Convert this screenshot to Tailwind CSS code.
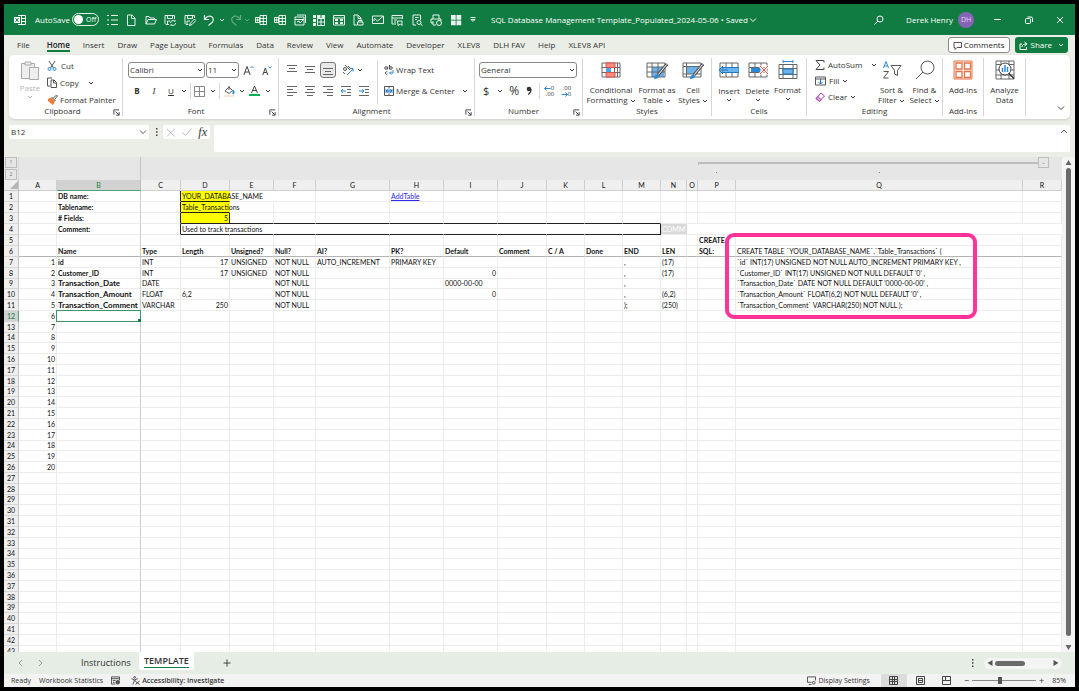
<!DOCTYPE html>
<html lang="en">
  <head>
    <meta charset="UTF-8" />
    <meta name="viewport" content="width=device-width, initial-scale=1.0" />
    <title>SQL Database Management Template_Populated_2024-05-06</title>
    <script src="https://cdn.jsdelivr.net/npm/@tailwindcss/browser@4"></script>
  </head>
  <body class="flex h-screen flex-col overflow-hidden border-4 border-black bg-[#ebeee7] font-['Open_Sans','Noto_Sans',sans-serif] text-[8px] leading-[10px] text-[#333]">
    <!-- shared icons -->
    <svg class="hidden">
      <symbol id="chev" viewBox="0 0 6 6"><path d="M1 2l2 2 2-2" fill="none" stroke="currentColor" /></symbol>
      <symbol id="launch" viewBox="0 0 8 8"><path d="M1 6.500V1h6M3 3l4 4M7 3.500V7H3.500" fill="none" stroke="currentColor" /></symbol>
      <symbol id="tbl" viewBox="0 0 12 12"><path d="M5 1.500h6.500v9H5zM5 4.500h6.500M5 7.500h6.500M8.300 1.500v9M.5 3.500h4v5h-4zM1 6h3M2.500 4.500v3" fill="none" stroke="currentColor" /></symbol>
    </svg>

    <header class="flex h-[31px] shrink-0 items-center bg-[#107c41] text-white">
      <svg class="ml-[10px] size-3" viewBox="0 0 12 12" fill="none" stroke="currentColor"><path d="M4 1.500h7.500v9H4M7.500 1.500v9M7 4.500h4.500M7 7.500h4.500" /><path d="M0 3h6v6H0z" fill="white" stroke="none" /><path d="M1.500 4.200l3 3.600M4.500 4.200l-3 3.600" stroke="#107c41" /></svg>
      <label for="autosave" class="ml-[9px] w-[37px] whitespace-nowrap">AutoSave</label>
      <button id="autosave" class="flex h-[13px] w-[27px] items-center gap-[3px] rounded-full border border-white/90 pl-px text-[7px]"><span class="size-[9px] rounded-full bg-white"></span>Off</button>
      <div class="ml-[7px] flex w-[144px] items-center justify-between text-white/90">
        <button aria-label="Bullets"><svg class="size-3" viewBox="0 0 12 12" stroke="currentColor"><path d="M1 1.500h2M1 6h2M1 10.500h2M5 1.500h7M5 6h7M5 10.500h7" /></svg></button>
        <button aria-label="New"><svg class="size-3" viewBox="0 0 12 12" fill="none" stroke="currentColor"><path d="M2.500 1h4.500l3 3v7.500h-7.500zM6.500 1v3.500H10" /></svg></button>
        <button aria-label="Open"><svg class="size-3" viewBox="0 0 12 12" fill="none" stroke="currentColor"><path d="M1 10V2.500h3l1 1.500h4.500v1.500M1 10l2-4.500h8.500L9.500 10z" /></svg></button>
        <button aria-label="Save"><svg class="size-3" viewBox="0 0 12 12" fill="none" stroke="currentColor"><path d="M5 10.500H2L1 9.500v-8h9.500V5M3.500 1.500v3h5v-3M3.500 10.500V7H6M6.500 9a2.500 2.500 0 0 1 4.500-1.500V6M11.500 9a2.500 2.500 0 0 1-4.500 1.500V12" /></svg></button>
        <button aria-label="Save as"><svg class="size-3" viewBox="0 0 12 12" fill="none" stroke="currentColor"><path d="M4.500 10.500H2L1 9.500v-8h9.500V4M3.500 1.500v3h5v-3M3 10.500V7h3M5.500 11.500l1-2.500L10.500 5 12 6.500 8 10.500z" /></svg></button>
        <button aria-label="Undo"><svg class="size-3" viewBox="0 0 12 12" fill="none" stroke="currentColor" stroke-width="1.200"><path d="M1.500 1v4.500H6M1.800 5.200C4 2 7 1.300 9 3s1.500 4 0 5.500L5.500 11.500" /></svg></button>
        <svg class="-mx-[3px] size-[6px]"><use href="#chev" /></svg>
        <button aria-label="Redo" class="text-white/35"><svg class="size-3" viewBox="0 0 12 12" fill="none" stroke="currentColor" stroke-width="1.200"><path d="M10.500 1v4.500H6M10.200 5.200C8 2 5 1.300 3 3s-1.500 4 0 5.500L6.500 11.500" /></svg></button>
        <svg class="-ml-[5px] size-[6px] text-white/35"><use href="#chev" /></svg>
      </div>
      <div class="ml-[5px] flex w-[222px] items-center justify-between text-white/90">
        <button aria-label="Insert columns"><svg class="size-3"><use href="#tbl" /></svg></button>
        <button aria-label="Delete columns"><svg class="size-3"><use href="#tbl" /></svg></button>
        <button aria-label="Edit range"><svg class="size-3" viewBox="0 0 12 12" fill="none" stroke="currentColor"><path d="M1 3h9v8H1zM1 5.500h9M3 1h8.500v8M3 8l2-1 1 2 3-3" /></svg></button>
        <button aria-label="Pivot"><svg class="size-3" viewBox="0 0 12 12" fill="none" stroke="currentColor"><path d="M4.500 4.500h7v7h-7zM4.500 8h7M8 4.500v7" /><path d="M0 1h3v3H0zM4 1h3.500v3H4zM8.500 1H12v3H8.500zM0 5h3v3H0zM0 9h3v3H0z" fill="currentColor" stroke="none" /></svg></button>
        <button aria-label="Freeze panes"><svg class="size-3" viewBox="0 0 12 12" fill="none" stroke="currentColor"><path d="M.5 1.500h11v9.500H.5zM.5 4h11" /><path d="M2 5h3v2H2zM7 5h3v2H7zM2 8h3v2H2zM7 8h3v2H7z" fill="currentColor" stroke="none" /></svg></button>
        <button aria-label="Page setup"><svg class="size-3" viewBox="0 0 12 12" fill="none" stroke="currentColor"><path d="M5 11H2V1h4l3 3v2M6 1v3.500h3M5.500 8h5.500v3H5.500zM6.500 8V6.500H10V8" /></svg></button>
        <button aria-label="Email"><svg class="size-3" viewBox="0 0 12 12" fill="none" stroke="currentColor"><path d="M.5 2h11v7.500H.5zM2 4l3.500 3L11 2.500M1 6h2" /></svg></button>
        <button aria-label="Form"><svg class="size-3" viewBox="0 0 12 12" fill="none" stroke="currentColor"><path d="M5 10H1V1.500h10.500V5M1 4h10.500M3 6h3M3 8h2M6.500 7h4.500v4.500L9.500 10 7 11.500z" /></svg></button>
        <button aria-label="Print preview"><svg class="size-3" viewBox="0 0 12 12" fill="none" stroke="currentColor"><path d="M5 11H2V1h7.500v5M4 3.500h3.500M4 5.500h2" /><circle cx="8" cy="8.500" r="2" /><path d="M9.500 10l2 1.500" /></svg></button>
        <button aria-label="Quick print"><svg class="size-3" viewBox="0 0 12 12" fill="none" stroke="currentColor"><path d="M3 5V1h6v4M3 9H1V5h10v2M3 7v4h3" /><circle cx="9" cy="9" r="2.500" /></svg></button>
        <button aria-label="Grid"><svg class="size-3" viewBox="0 0 12 12" fill="currentColor"><path d="M1 1h4.700v4.700H1zM6.500 1h4.700v4.700H6.500zM1 6.500h4.700v4.700H1zM6.500 6.500h4.700v4.700H6.500z" /></svg></button>
        <button aria-label="Customize"><svg class="size-[8px]" viewBox="0 0 8 8" fill="none" stroke="currentColor"><path d="M1.500 1.500h5M2 3.500l2 2 2-2z" /></svg></button>
      </div>
      <div class="ml-[14px] flex flex-1 items-center gap-px whitespace-nowrap">SQL Database Management Template_Populated_2024-05-06 • Saved <svg class="size-2" viewBox="0 0 8 8"><path d="M1 2.500l3 3 3-3" fill="none" stroke="currentColor" /></svg></div>
      <button aria-label="Search" class="mr-[22px]"><svg class="size-[10px]" viewBox="0 0 10 10" fill="none" stroke="currentColor"><circle cx="6" cy="4" r="3" /><path d="M4 6L.5 9.500" /></svg></button>
      <span class="whitespace-nowrap">Derek Henry</span>
      <span class="ml-[5px] flex size-4 items-center justify-center rounded-full bg-[#8764b8] text-[7px] text-[#e2d3f2]">DH</span>
      <div class="ml-[19px] mr-[11px] flex w-[71px] items-center justify-between">
        <button aria-label="Minimize"><svg class="size-2" viewBox="0 0 8 8" stroke="currentColor"><path d="M1 3.500h7" /></svg></button>
        <button aria-label="Restore"><svg class="size-2" viewBox="0 0 8 8" fill="none" stroke="currentColor"><rect x=".5" y="2.500" width="5" height="5" rx="1" /><path d="M2.500 1h3.500a1.500 1.500 0 0 1 1.500 1.500V6" /></svg></button>
        <button aria-label="Close"><svg class="size-2" viewBox="0 0 8 8" stroke="currentColor"><path d="M1 1l6 6M7 1L1 7" /></svg></button>
      </div>
    </header>

    <nav class="flex h-5 shrink-0 items-center gap-[13px] whitespace-nowrap pl-[13px] pr-[7px]">
      <a href="#" class="mr-[4px]">File</a>
      <a href="#" class="border-b-2 border-[#107c41] pt-[2px] font-semibold text-[#222]">Home</a>
      <a href="#">Insert</a>
      <a href="#">Draw</a>
      <a href="#">Page Layout</a>
      <a href="#">Formulas</a>
      <a href="#">Data</a>
      <a href="#">Review</a>
      <a href="#">View</a>
      <a href="#">Automate</a>
      <a href="#">Developer</a>
      <a href="#">XLEV8</a>
      <a href="#">DLH FAV</a>
      <a href="#">Help</a>
      <a href="#">XLEV8 API</a>
      <button class="ml-auto flex h-4 items-center gap-[2px] rounded-[3px] border border-[#8a8a8a] bg-white px-1 text-[#222]"><svg class="size-[9px]" viewBox="0 0 9 9" fill="none" stroke="#555"><path d="M1 1.500h7.500v5H4l-2 2v-2H1z" /></svg>Comments</button>
      <button class="-ml-[8px] flex h-4 items-center gap-[3px] rounded-[3px] bg-[#107c41] px-1 text-white"><svg class="size-[9px]" viewBox="0 0 9 9" fill="none" stroke="currentColor"><path d="M3 3H1v5.500h6.500V6M3 6c0-2 1.500-3 4-3M5.500 1l2.500 2-2.500 2" /></svg>Share<svg class="ml-[3px] size-[6px]"><use href="#chev" /></svg></button>
    </nav>

    <section class="mx-[5px] flex h-16 shrink-0 rounded-[5px] bg-white py-[3px] shadow-sm">
      <!-- Clipboard -->
      <div class="relative flex w-[114px] shrink-0 flex-col border-r border-[#d6d6d6]">
        <div class="flex flex-1 gap-[7px] pl-[11px]">
          <button class="flex w-[20px] flex-col items-center pt-[2px] text-[#b5b5b5]"><svg class="h-[21px] w-[20px]" viewBox="0 0 20 21" fill="#eee" stroke="#aaa"><path d="M1.500 3.500h13v15h-13z" /><path d="M5 2h6v3H5zM9.500 7.500h9v12h-9z" /></svg><span class="mt-[2px]">Paste</span><svg class="mt-px size-[6px]"><use href="#chev" /></svg></button>
          <div class="flex flex-col gap-[6px] whitespace-nowrap pt-[3px]">
            <button class="flex items-center gap-1"><svg class="size-[10px]" viewBox="0 0 10 10" fill="none" stroke="#555"><path d="M2 0l4.500 7M8 0L3.500 7" /><circle cx="2.500" cy="8" r="1.500" stroke="#2b88d8" /><circle cx="7.500" cy="8" r="1.500" stroke="#2b88d8" /></svg>Cut</button>
            <button class="flex items-center gap-[3px]"><svg class="h-[11px] w-[10px]" viewBox="0 0 10 11" fill="none" stroke="#555"><path d="M3 9H.5V1H5M4 3h3l2.500 2.500v5H4zM6.500 3v3h3" /></svg>Copy<svg class="ml-[6px] size-[6px]"><use href="#chev" /></svg></button>
            <button class="flex items-center gap-[2px]"><svg class="size-[11px]" viewBox="0 0 11 11"><path d="M1 5l3-1.500 4 4L6 11 1 7z" fill="#ed7d31" /><path d="M4.500 3l4 4M6 4.500L9.500 1l1 1-3 3.500" fill="none" stroke="#555" /></svg>Format Painter</button>
          </div>
        </div>
        <p class="pr-[6px] text-center">Clipboard</p>
        <svg class="absolute bottom-0 right-[2px] size-[7px]"><use href="#launch" /></svg>
      </div>
      <!-- Font -->
      <div class="relative flex w-[156px] shrink-0 flex-col border-r border-[#d6d6d6] pl-[5px]">
        <div class="flex flex-1 flex-col gap-[5px] pt-[4px]">
          <div class="flex items-center">
            <div class="relative">
              <select aria-label="Font" class="h-4 w-[77px] appearance-none rounded-[3px] border border-[#888] bg-white pl-px"><option>Calibri</option></select>
              <svg class="pointer-events-none absolute right-[2px] top-[5px] size-[6px]"><use href="#chev" /></svg>
            </div>
            <div class="relative ml-px">
              <select aria-label="Size" class="h-4 w-[33px] appearance-none rounded-[3px] border border-[#888] bg-white pl-px"><option>11</option></select>
              <svg class="pointer-events-none absolute right-[2px] top-[5px] size-[6px]"><use href="#chev" /></svg>
            </div>
            <button aria-label="Grow font" class="ml-[4px]"><svg class="h-[11px] w-[11px]" viewBox="0 0 11 11" fill="none" stroke="#444"><path d="M.8 10L4 1.500 7.200 10M2 7h4" /><path d="M7.500 3L9 1.500 10.500 3" stroke="#2b88d8" /></svg></button>
            <button aria-label="Shrink font" class="ml-[8px]"><svg class="h-[11px] w-[10px]" viewBox="0 0 10 11" fill="none" stroke="#444"><path d="M.8 10L3.300 3l2.500 7M1.800 7.500h3" /><path d="M6.500 1.500L8 3l1.500-1.500" stroke="#2b88d8" /></svg></button>
          </div>
          <div class="flex items-center">
            <button class="ml-[5px] w-[8px] font-bold">B</button>
            <button class="ml-[9px] w-[8px] font-['Liberation_Serif',serif] text-[9px] italic">I</button>
            <button class="ml-[9px] w-[8px] underline">U</button>
            <svg class="ml-[6px] size-[6px]"><use href="#chev" /></svg>
            <span class="ml-[3px] h-4 border-l border-[#d6d6d6]"></span>
            <button aria-label="Borders" class="ml-[3px]"><svg class="size-[11px]" viewBox="0 0 11 11" fill="none" stroke="#888"><path d="M.5.5h10v10H.5zM5.500.5v10M.5 5.500h10" /></svg></button>
            <svg class="ml-[5px] size-[6px]"><use href="#chev" /></svg>
            <span class="ml-[3px] h-4 border-l border-[#d6d6d6]"></span>
            <button aria-label="Fill colour" class="ml-[4px]"><svg class="size-[11px]" viewBox="0 0 11 11"><path d="M1 5l4-4 3.500 3.500-3.500 3zM5 0v4" fill="none" stroke="#555" /><path d="M9 4c1.500 1.500 1.500 4 0 4z" fill="#2b88d8" stroke="#2b88d8" /><path d="M0 9h10v2H0z" fill="#fbe5d6" /></svg></button>
            <svg class="ml-[4px] size-[6px]"><use href="#chev" /></svg>
            <button aria-label="Font colour" class="ml-[4px]"><svg class="h-[12px] w-[11px]" viewBox="0 0 11 12"><path d="M2.500 8L5.500 1l3 7M3.500 5.500h4" fill="none" stroke="#444" /><path d="M0 9h11v2H0z" fill="#00b050" /></svg></button>
            <svg class="ml-[5px] size-[6px]"><use href="#chev" /></svg>
          </div>
        </div>
        <p class="pr-[14px] text-center">Font</p>
        <svg class="absolute bottom-0 right-[2px] size-[7px]"><use href="#launch" /></svg>
      </div>
      <!-- Alignment -->
      <div class="relative flex w-[196px] shrink-0 flex-col border-r border-[#d6d6d6]">
        <div class="flex flex-1">
          <div class="flex w-[98px] flex-col gap-[5px] pl-[7px] pt-[4px]">
            <div class="flex h-4 items-center gap-[6px]">
              <button aria-label="Top align"><svg class="size-3" viewBox="0 0 12 12" stroke="#666"><path d="M1 1.500h10M3 4.500h6M1 7.500h10" /></svg></button>
              <button aria-label="Middle align"><svg class="size-3" viewBox="0 0 12 12" stroke="#666"><path d="M1 2.500h10M3 5.500h6M1 8.500h10" /></svg></button>
              <button aria-label="Bottom align" class="-mx-[2px] flex size-4 items-center justify-center rounded-[3px] border border-[#777] bg-[#e8e8e8]"><svg class="size-3" viewBox="0 0 12 12" stroke="#666"><path d="M1 4.500h10M3 7.500h6M1 10.500h10" /></svg></button>
              <button aria-label="Orientation" class="ml-[2px]"><svg class="size-3" viewBox="0 0 12 12" fill="none" stroke="#555"><circle cx="3" cy="5" r="1.500" /><path d="M3 1l5 5M6 2l2 2M1 8l2 2" /><path d="M5 11l6-6M8 4.500h3v3" stroke="#2b88d8" /></svg></button>
              <svg class="-ml-[3px] size-[6px]"><use href="#chev" /></svg>
            </div>
            <div class="flex h-4 items-center gap-[6px]">
              <button aria-label="Align left"><svg class="size-3" viewBox="0 0 12 12" stroke="#666"><path d="M1 1.500h10M1 4.500h6M1 7.500h10M1 10.500h6" /></svg></button>
              <button aria-label="Center"><svg class="size-3" viewBox="0 0 12 12" stroke="#666"><path d="M1 1.500h10M3 4.500h6M1 7.500h10M3 10.500h6" /></svg></button>
              <button aria-label="Align right"><svg class="size-3" viewBox="0 0 12 12" stroke="#666"><path d="M1 1.500h10M5 4.500h6M1 7.500h10M5 10.500h6" /></svg></button>
              <button aria-label="Decrease indent"><svg class="size-3" viewBox="0 0 12 12" fill="none" stroke="#666"><path d="M1 1.500h10M7 4.500h4M7 7.500h4M1 10.500h10" /><path d="M1 6h5M3 4L1 6l2 2" stroke="#2b88d8" /></svg></button>
              <button aria-label="Increase indent"><svg class="size-3" viewBox="0 0 12 12" fill="none" stroke="#666"><path d="M1 1.500h10M7 4.500h4M7 7.500h4M1 10.500h10" /><path d="M1 6h5M4 4l2 2-2 2" stroke="#2b88d8" /></svg></button>
            </div>
          </div>
          <div class="my-[2px] flex flex-1 flex-col gap-[5px] border-l border-[#d6d6d6] pl-[6px] pt-[2px]">
            <button class="flex h-4 items-center gap-[2px]"><svg class="size-[10px]" viewBox="0 0 10 10" fill="none" stroke="#555"><circle cx="2" cy="3" r="1.300" /><path d="M3.700 1.500v3M5.500 0v4.500M3.500 7a1.300 1.300 0 1 0 0 2" /><circle cx="7" cy="3" r="1.300" /><path d="M9 5v3H5.500M7 6.500L5.500 8 7 9.500" stroke="#2b88d8" /></svg>Wrap Text</button>
            <button class="flex h-4 items-center gap-[2px] whitespace-nowrap"><svg class="size-[10px]" viewBox="0 0 10 10" fill="none" stroke="#555"><path d="M.5.5h9v9h-9zM5 .5v2M5 7.500v2" /><path d="M1 3h8v4H1z" fill="#9cc9ee" stroke="none" /><path d="M2 5h6M3.500 3.500L2 5l1.500 1.500M6.500 3.500L8 5 6.500 6.500" stroke="#1f78c1" /></svg>Merge &amp; Center<svg class="ml-[5px] size-[6px]"><use href="#chev" /></svg></button>
          </div>
        </div>
        <p class="pr-[10px] text-center">Alignment</p>
        <svg class="absolute bottom-0 right-[2px] size-[7px]"><use href="#launch" /></svg>
      </div>
      <!-- Number -->
      <div class="relative flex w-[108px] shrink-0 flex-col border-r border-[#d6d6d6] pl-[4px]">
        <div class="flex flex-1 flex-col gap-[5px] pt-[4px]">
          <div class="relative w-[98px]">
            <select aria-label="Number format" class="h-4 w-full appearance-none rounded-[3px] border border-[#888] bg-white pl-px"><option>General</option></select>
            <svg class="pointer-events-none absolute right-[2px] top-[5px] size-[6px]"><use href="#chev" /></svg>
          </div>
          <div class="flex h-4 items-center">
            <button class="ml-[4px] text-[11px]">$</button>
            <svg class="ml-[8px] size-[6px]"><use href="#chev" /></svg>
            <button class="ml-[6px] text-[12px]">%</button>
            <button aria-label="Comma style" class="ml-[7px]"><svg class="h-[10px] w-[6px]" viewBox="0 0 6 10"><circle cx="3" cy="3" r="2.300" fill="#333" /><path d="M5 3c0 3-1 4.500-3 5.500" fill="none" stroke="#333" stroke-width="1.300" /></svg></button>
            <span class="ml-[7px] h-4 border-l border-[#d6d6d6]"></span>
            <button aria-label="Increase decimal" class="ml-[3px] flex w-[11px] flex-col items-end text-[6px] leading-[6px]"><span class="flex items-center"><svg class="h-[5px] w-[7px]" viewBox="0 0 7 5" fill="none" stroke="#2b88d8"><path d="M.5 2.500h6M2.500.5l-2 2 2 2" /></svg>0</span><span>.00</span></button>
            <button aria-label="Decrease decimal" class="ml-[6px] flex w-[11px] flex-col items-end text-[6px] leading-[6px]"><span>.00</span><span class="flex items-center"><svg class="h-[5px] w-[7px]" viewBox="0 0 7 5" fill="none" stroke="#2b88d8"><path d="M.5 2.500h6M4.500.5l2 2-2 2" /></svg>0</span></button>
          </div>
        </div>
        <p class="pr-[14px] text-center">Number</p>
        <svg class="absolute bottom-0 right-[2px] size-[7px]"><use href="#launch" /></svg>
      </div>
      <!-- Styles -->
      <div class="flex w-[129px] shrink-0 flex-col border-r border-[#d6d6d6]">
        <div class="flex flex-1 justify-center gap-[4px] pt-[2px]">
          <button class="flex w-[48px] flex-col items-center"><svg class="size-5" viewBox="0 0 20 20" fill="none" stroke="#666"><path d="M1 3h18v14H1zM1 7.500h18M1 12.500h18M13.500 3v14M16.500 3v14" /><path d="M5 3h9v4.500H5zM5 12.500h9V17H5z" fill="#ff8a80" stroke="#d9534a" /><path d="M5 8h5v4H5z" fill="#4aa3e8" stroke="none" /></svg><span class="mt-[5px] whitespace-nowrap">Conditional<br />Formatting <svg class="inline size-[6px]"><use href="#chev" /></svg></span></button>
          <button class="flex w-[36px] flex-col items-center"><svg class="h-5 w-[22px]" viewBox="0 0 22 20" fill="none" stroke="#666"><path d="M6 7h12v10H6z" fill="#6bb3ec" stroke="none" /><path d="M1 3h18v14H1zM1 7h18M1 12h18M6 3v14M12 3v14" /><path d="M21 4l-9 11" stroke="#555" stroke-width="3" /><path d="M20.500 4.500l-8 10" stroke="#fff" /><path d="M8 19c0-3 2-5 4-4s1 4-4 4z" fill="#2b88d8" stroke="none" /></svg><span class="mt-[5px] whitespace-nowrap">Format as<br />Table <svg class="inline size-[6px]"><use href="#chev" /></svg></span></button>
          <button class="flex w-[28px] flex-col items-center"><svg class="h-5 w-[22px]" viewBox="0 0 22 20" fill="none" stroke="#666"><path d="M5 7h11v7H5z" fill="#6bb3ec" stroke="none" /><path d="M1 3h18v14H1zM1 6.500h18M4.500 3v14M1 14h18" /><path d="M21 4l-9 11" stroke="#555" stroke-width="3" /><path d="M20.500 4.500l-8 10" stroke="#fff" /><path d="M8 19c0-3 2-5 4-4s1 4-4 4z" fill="#2b88d8" stroke="none" /></svg><span class="mt-[5px] whitespace-nowrap">Cell<br />Styles <svg class="inline size-[6px]"><use href="#chev" /></svg></span></button>
        </div>
        <p class="text-center">Styles</p>
      </div>
      <!-- Cells -->
      <div class="flex w-[95px] shrink-0 flex-col border-r border-[#d6d6d6]">
        <div class="flex flex-1 justify-center gap-[3px] pt-[2px]">
          <button class="flex w-[25px] flex-col items-center"><svg class="size-5" viewBox="0 0 20 20" fill="none" stroke="#666"><path d="M1 3h18v14H1zM7 3v14M13 3v14" /><path d="M3 7.500h17v5H3z" fill="#6bb3ec" stroke="#1f78c1" /><path d="M0 10h9M4 6l-4 4 4 4" stroke="#1f78c1" /></svg><span class="mt-[6px]">Insert</span><svg class="mt-px size-[6px]"><use href="#chev" /></svg></button>
          <button class="flex w-[26px] flex-col items-center"><svg class="size-5" viewBox="0 0 20 20" fill="none" stroke="#666"><path d="M1 3h18v14H1zM7 3v14M13 3v14M1 7.500h18M1 12.500h18" /><path d="M3 8h9v4H3z" fill="#2b88d8" stroke="none" /><path d="M12 6l8 8M20 6l-8 8" stroke="#fff" stroke-width="3" /><path d="M12 6l8 8M20 6l-8 8" stroke="#e8503a" /></svg><span class="mt-[6px]">Delete</span><svg class="mt-px size-[6px]"><use href="#chev" /></svg></button>
          <button class="flex w-[28px] flex-col items-center"><svg class="size-5" viewBox="0 0 20 20" fill="none" stroke="#666"><path d="M1 4.500h18v14H1zM1 8.500h18M1 14.500h18M5 4.500v14M15 4.500v14" /><path d="M5 9h10v5H5z" fill="#6bb3ec" stroke="#1f78c1" /><path d="M5 1.500h10M5 0v3M15 0v3" stroke="#2b88d8" /></svg><span class="mt-[5px]">Format</span><svg class="mt-px size-[6px]"><use href="#chev" /></svg></button>
        </div>
        <p class="text-center">Cells</p>
      </div>
      <!-- Editing -->
      <div class="flex w-[136px] shrink-0 flex-col border-r border-[#d6d6d6] pl-[8px]">
        <div class="flex flex-1">
          <div class="flex w-[62px] flex-col gap-[6px] pt-[2px]">
            <button class="flex items-center gap-[3px]"><svg class="size-[10px]" viewBox="0 0 10 10" fill="none" stroke="#444"><path d="M9 2.500V.5H1L5 5 1 9.500h8v-2" /></svg>AutoSum<svg class="ml-auto size-[6px]"><use href="#chev" /></svg></button>
            <button class="flex items-center gap-[3px]"><svg class="h-[10px] w-[11px]" viewBox="0 0 11 10" fill="none" stroke="#555"><path d="M.5 1h10v8H.5zM.5 3h10" /><path d="M5.500 3v5M3.500 6l2 2 2-2" stroke="#1f78c1" /></svg>Fill<svg class="size-[6px]"><use href="#chev" /></svg></button>
            <button class="flex items-center gap-[3px]"><svg class="size-[10px]" viewBox="0 0 10 10" fill="none" stroke="#a040a8"><path d="M1 6.500L6 1l3.500 3L4.500 9z" /><path d="M1 6.500l2-2L6.500 8l-2 1.500z" fill="#d9a8dc" /></svg>Clear<svg class="size-[6px]"><use href="#chev" /></svg></button>
          </div>
          <div class="flex gap-[3px] pt-[2px]">
            <button class="flex w-[29px] flex-col items-center"><svg class="size-5" viewBox="0 0 20 20" fill="none" stroke="#555"><path d="M1.500 8L4 1.500 6.500 8M2.500 6h3" stroke="#2b88d8" /><path d="M1.500 11.500h5L1.500 18h5" /><path d="M9 5.500h10l-3.500 5v5l-3-1.500v-3.500z" /></svg><span class="mt-[5px] whitespace-nowrap">Sort &amp;<br />Filter <svg class="inline size-[6px]"><use href="#chev" /></svg></span></button>
            <button class="flex w-[31px] flex-col items-center"><svg class="size-5" viewBox="0 0 20 20" fill="none" stroke="#555"><circle cx="12.500" cy="7.500" r="6.500" /><path d="M8 12l-7 7" /></svg><span class="mt-[5px] whitespace-nowrap">Find &amp;<br />Select <svg class="inline size-[6px]"><use href="#chev" /></svg></span></button>
          </div>
        </div>
        <p class="pr-[8px] text-center">Editing</p>
      </div>
      <div class="flex w-[41px] shrink-0 flex-col border-r border-[#d6d6d6] pt-[2px] text-center">
        <button class="flex flex-1 flex-col items-center"><svg class="size-5" viewBox="0 0 20 20" fill="#fdeee8" stroke="#e3764c"><path d="M1 1h18v18H1z" /><path d="M3 3h6v6H3zM11.500 3h6v6h-6zM3 11.500h6v6H3zM11.500 11.500h6v6h-6z" fill="white" stroke-width="1.300" /></svg><span class="mt-[5px]">Add-ins</span></button>
        <p>Add-ins</p>
      </div>
      <div class="flex w-[42px] shrink-0 flex-col border-r border-[#d6d6d6] pt-[2px]">
        <button class="flex flex-col items-center"><svg class="size-5" viewBox="0 0 20 20" fill="none" stroke="#666"><path d="M1 1h18v18H1zM1 4.500h18M1 10h18M1 15h18M6 1v18M14 1v18" /><circle cx="10" cy="9" r="6" fill="white" stroke="#444" /><path d="M14 13.500l5 5" stroke="#333" stroke-width="1.500" /><path d="M7.500 8v4M10 5v7M12.500 7v5" stroke="#2b88d8" stroke-width="1.500" /></svg><span class="mt-[5px]">Analyze<br />Data</span></button>
      </div>
      <button aria-label="Collapse ribbon" class="ml-auto mr-[5px] mb-1 self-end"><svg class="size-2" viewBox="0 0 8 8"><path d="M1 2.500l3 3 3-3" fill="none" stroke="#444" /></svg></button>
    </section>

    <div class="flex shrink-0 items-start pb-[5px] pl-[5px] pr-[5px] pt-[6px]">
      <div class="flex h-[14px] w-[140px] items-center rounded-[2px] bg-white pr-[2px]">
        <input aria-label="Name box" value="B12" class="min-w-0 flex-1 pl-[2px]" />
        <svg class="size-2" viewBox="0 0 8 8"><path d="M1 2.500l3 3 3-3" fill="none" stroke="#555" /></svg>
      </div>
      <svg class="ml-[6px] h-[14px] w-[3px]" viewBox="0 0 3 14" fill="#444"><path d="M1 3h1.500v1.500H1zM1 6.300h1.500v1.500H1zM1 9.600h1.500v1.500H1z" /></svg>
      <div class="ml-[5px] flex h-[14px] w-[47px] items-center justify-between rounded-[2px] bg-white px-[3px]">
        <button aria-label="Cancel"><svg class="size-[9px]" viewBox="0 0 9 9" stroke="#bbb"><path d="M1 1l7.500 7.500M8.500 1L1 8.500" /></svg></button>
        <button aria-label="Enter"><svg class="size-[10px]" viewBox="0 0 10 9" fill="none" stroke="#bbb"><path d="M.5 5l3 3L9.500 1" /></svg></button>
        <button class="font-['Liberation_Serif',serif] text-[12px] italic">fx</button>
      </div>
      <div class="ml-[4px] flex h-[27px] flex-1 items-start rounded-[2px] bg-white">
        <input aria-label="Formula" class="h-full min-w-0 flex-1 px-1" />
        <button aria-label="Collapse formula bar" class="mr-[2px] mt-[3px]"><svg class="size-2" viewBox="0 0 8 8"><path d="M1 5l3-3 3 3" fill="none" stroke="#555" /></svg></button>
      </div>
    </div>

    <main class="flex min-h-0 flex-1">
      <div class="flex min-w-0 flex-1 flex-col overflow-hidden bg-white">
        <!-- outline levels -->
        <div class="flex h-[23px] shrink-0 bg-[#e6e6e6] text-[5px] leading-[9px] text-[#777]">
          <div class="flex w-[15px] flex-col gap-px border-r border-[#d8d8d8] px-px text-center">
            <button class="border border-[#bdbdbd]">1</button>
            <button class="border border-[#bdbdbd]">2</button>
          </div>
          <div class="w-[122px] border-r border-[#c4c4c4]"></div>
          <div class="flex flex-1 items-start justify-end pr-[13px]">
            <div class="relative mt-[5px] h-[3px] w-[340px] border-l border-t-2 border-[#bdbdbd]">
              <span class="absolute left-[17px] top-2 size-px bg-[#888]"></span>
              <span class="absolute left-[180px] top-2 size-px bg-[#888]"></span>
            </div>
            <button class="size-[11px] border border-[#bdbdbd] text-[7px]">-</button>
          </div>
        </div>
        <table class="w-full table-fixed border-separate border-spacing-0 font-['Lato',sans-serif] text-[7px] leading-[10px] text-[#111]">
          <colgroup id="cols"></colgroup>
          <thead><tr id="letters" class="h-[11px]"></tr></thead>
          <tbody id="grid"></tbody>
        </table>
      </div>
      <div class="flex w-[13px] shrink-0 flex-col items-center rounded-t bg-[#f4f4f4] pb-px pt-[2px]">
        <svg class="size-[7px]" viewBox="0 0 7 7" fill="#666"><path d="M.5 6h6l-3-5z" /></svg>
        <div class="my-[2px] mb-[8px] w-[5px] flex-1 rounded-full bg-[#6b6b6b]"></div>
        <svg class="size-[7px]" viewBox="0 0 7 7" fill="#666"><path d="M.5 1h6l-3 5z" /></svg>
      </div>
    </main>

    <div class="flex h-[22px] shrink-0 items-center bg-[#e5ede4]">
      <svg class="ml-[12px] size-2" viewBox="0 0 8 8"><path d="M6 1L3 4l3 3" fill="none" stroke="#999" /></svg>
      <svg class="ml-[13px] size-2" viewBox="0 0 8 8"><path d="M2 1l3 3-3 3" fill="none" stroke="#999" /></svg>
      <a href="#" class="ml-[36px] w-[58px] text-[9px]">Instructions</a>
      <a href="#" class="flex h-[18px] items-center self-start rounded-b-[3px] bg-white px-[5px] text-[9px] font-semibold"><span class="border-b border-[#107c41] leading-[12px]">TEMPLATE</span></a>
      <button aria-label="New sheet" class="ml-[29px]"><svg class="size-2" viewBox="0 0 8 8" stroke="#444"><path d="M.5 4h7M4 .5v7" /></svg></button>
      <svg class="ml-auto h-3 w-[3px]" viewBox="0 0 3 12" fill="#444"><path d="M1 2h1.500v1.500H1zM1 5.300h1.500v1.500H1zM1 8.600h1.500v1.500H1z" /></svg>
      <div class="ml-[10px] mr-[13px] flex h-[11px] w-[78px] items-center rounded-full bg-[#f4f4f4] px-[3px]">
        <svg class="size-[6px]" viewBox="0 0 6 6" fill="#555"><path d="M5.500 0v6L.5 3z" /></svg>
        <div class="ml-[2px] h-[5px] w-[30px] rounded-full bg-[#6b6b6b]"></div>
        <svg class="ml-auto size-[6px]" viewBox="0 0 6 6" fill="#555"><path d="M.5 0v6l5-3z" /></svg>
      </div>
    </div>

    <footer class="flex h-[13px] shrink-0 items-center whitespace-nowrap bg-[#f3f3f3] pl-[7px] pr-[9px] text-[7px]">
      <span>Ready</span>
      <span class="ml-[8px]">Workbook Statistics</span>
      <svg class="ml-[8px] size-[9px]" viewBox="0 0 10 10" fill="none" stroke="#444"><path d="M5 9H.5V1h9v4M.5 3h9M2 5h3M2 7h2" /><circle cx="7.500" cy="7" r="2" fill="#555" /></svg>
      <svg class="ml-[11px] mr-[2px] size-[9px]" viewBox="0 0 10 10" fill="none" stroke="#444"><circle cx="4" cy="1.500" r="1" /><path d="M.5 3l3 1v2l-1.500 3.500M7.500 3l-3 1v2M5 6l4.500 3.500M9.500 5.500L5 9.500" /></svg>
      <span class="font-semibold">Accessibility: Investigate</span>
      <button class="ml-auto flex items-center gap-[2px]"><svg class="size-[9px]" viewBox="0 0 10 10" fill="none" stroke="#444"><path d="M5 7H.5V1h9v4M2 9.500h3" /><circle cx="7.500" cy="7.500" r="1.500" /></svg>Display Settings</button>
      <button aria-label="Normal view" class="ml-[11px] flex h-full w-[26px] items-center justify-center bg-[#dcdcdc]"><svg class="size-[9px]" viewBox="0 0 9 9" fill="none" stroke="#444"><path d="M.5.5h8v8h-8zM3.500.5v8M5.500.5v8M.5 3.500h8M.5 5.500h8" /></svg></button>
      <button aria-label="Page layout view" class="ml-[9px]"><svg class="size-[9px]" viewBox="0 0 9 9" fill="none" stroke="#444"><path d="M.5.5h8v8h-8zM2.500 2.500h4v4h-4zM3 4.500h3" /></svg></button>
      <button aria-label="Page break view" class="ml-[17px]"><svg class="size-[9px]" viewBox="0 0 9 9" fill="none" stroke="#444"><path d="M.5.5h8v8h-8zM3.500.5v4h5M.5 4.500h3" /></svg></button>
      <span class="ml-[13px] text-[9px]">−</span>
      <input type="range" aria-label="Zoom" min="10" max="240" value="109" class="mx-[3px] h-[7px] w-[64px] appearance-none bg-[linear-gradient(#8a8a8a,#8a8a8a)] bg-[length:100%_1px] bg-center bg-no-repeat [&::-webkit-slider-thumb]:h-[7px] [&::-webkit-slider-thumb]:w-[4px] [&::-webkit-slider-thumb]:appearance-none [&::-webkit-slider-thumb]:bg-[#555]" />
      <span class="text-[9px]">+</span>
      <span class="ml-[8px]">85%</span>
    </footer>

    <script>
      const widths = [15, 38, 84, 40, 49, 44, 42, 74, 54, 54, 49, 38, 38, 38, 26, 11, 38, 287, 0];
      const names = "ABCDEFGHIJKLMNOPQR".split("");
      const bold = {
        B1: "DB name:", B2: "Tablename:", B3: "# Fields:", B4: "Comment:",
        B6: "Name", C6: "Type", D6: "Length", E6: "Unsigned?", F6: "Null?", G6: "AI?", H6: "PK?", I6: "Default",
        J6: "Comment", K6: "C / A", L6: "Done", M6: "END", N6: "LEN", P5: "CREATE", P6: "SQL:",
        B7: "id", B8: "Customer_ID", B9: "Transaction_Date", B10: "Transaction_Amount", B11: "Transaction_Comment",
      };
      const text = {
        D1: "YOUR_DATABASE_NAME", D2: "Table_Transactions", D4: "Used to track transactions",
        C7: "INT", C8: "INT", C9: "DATE", C10: "FLOAT", C11: "VARCHAR", D10: "6,2",
        E7: "UNSIGNED", E8: "UNSIGNED", G7: "AUTO_INCREMENT", H7: "PRIMARY KEY", I9: "0000-00-00",
        F7: "NOT NULL", F8: "NOT NULL", F9: "NOT NULL", F10: "NOT NULL", F11: "NOT NULL",
        M7: ",", M8: ",", M9: ",", M10: ",", M11: ");", N4: "COMM", N7: "(17)", N8: "(17)", N10: "(6,2)", N11: "(250)",
        Q6: "CREATE TABLE `YOUR_DATABASE_NAME`.`Table_Transactions` (",
        Q7: "`id` INT(17) UNSIGNED NOT NULL AUTO_INCREMENT PRIMARY KEY ,",
        Q8: "`Customer_ID` INT(17) UNSIGNED NOT NULL DEFAULT '0' ,",
        Q9: "`Transaction_Date` DATE NOT NULL DEFAULT '0000-00-00' ,",
        Q10: "`Transaction_Amount` FLOAT(6,2) NOT NULL DEFAULT '0' ,",
        Q11: "`Transaction_Comment` VARCHAR(250) NOT NULL );",
      };
      const numbers = { D3: "5", D7: "17", D8: "17", D11: "250", I8: "0", I10: "0" };
      for (let i = 1; i <= 20; i++) numbers["A" + (i + 6)] = i;

      document.getElementById("cols").innerHTML = widths
        .map((w) => (w ? `<col style="width:${w}px">` : "<col>"))
        .join("");
      document.getElementById("letters").innerHTML =
        `<th class="border-r border-b border-[#c4c4c4] bg-[#efefef] p-0"><svg class="ml-auto size-[8px]" viewBox="0 0 8 8"><path d="M8 0v8H0z" fill="#b5b5b5" /></svg></th>` +
        names
          .map((n) => `<th class="border-r border-b p-0 font-normal ${n === "B" ? "border-r-[#bdbdbd] border-b-[#4f9f77] bg-[#d2d2d2] text-[#107c41]" : "border-[#cfcfcf] bg-[#efefef]"}">${n}</th>`)
          .join("");

      function cell(n, r) {
        const id = n + r;
        let edge = n === "B" ? "border-r-[#cccccc]" : "border-r-[#ececec]";
        let bottom = r === 6 ? "border-b-[#b4b4b4]" : "border-b-[#ececec]";
        let extra = "";
        let body = bold[id] ?? text[id] ?? numbers[id] ?? "";
        if (bold[id]) extra += " font-bold";
        if (n === "B" && r > 8) extra += " text-[8px]";
        if (id in numbers) extra += " text-right";
        if (n === "D" && r < 4) {
          extra += " bg-[#ffff00]";
          bottom = "border-b-[#222]";
          if (r === 3) edge = "border-r-[#222]";
        }
        if (n === "C" && r < 5) edge = "border-r-[#222]";
        if (r === 4 && n >= "D" && n <= "M") {
          bottom = "border-b-[#222]";
          edge = n === "M" ? "border-r-[#222]" : "border-r-transparent";
        }
        if (r === 3 && n >= "D" && n <= "M") bottom = "border-b-[#222]";
        if (r === 4 && n > "M") edge = "border-r-transparent";
        if (id === "E1") edge = "border-r-transparent";
        if (id === "D1" || id === "D2") edge = "border-r-[#ffff00]";
        if (id === "N4") extra += " overflow-hidden bg-[#d9d9d9] text-white";
        if (id === "H1") body = '<a href="#" class="text-[#2a2af0] underline">AddTable</a>';
        if (id === "B12") {
          extra += " relative";
          body = '<span class="absolute -top-px -right-px -bottom-px -left-px border border-[#3a9766]"></span><span class="absolute -right-px -bottom-px size-[3px] bg-[#107c41]"></span>';
        }
        // highlight around the generated SQL
        if (id === "Q5") {
          extra += " relative";
          body = '<span class="absolute -left-[11px] -top-[2px] h-[86px] w-[252px] rounded-[9px] border-4 border-[#ff3399]"></span>';
        }
        return `<td class="whitespace-nowrap border-r border-b px-px py-0 ${edge} ${bottom}${extra}">${body}</td>`;
      }

      let rows = "";
      for (let r = 1; r <= 43; r++) {
        const short = r > 6 && (r - 6) % 5 === 3;
        const head = r === 12 ? "border-r-[#4f9f77] bg-[#d2d2d2] text-[#107c41]" : "border-r-[#c4c4c4] bg-[#efefef]";
        rows += `<tr class="${short ? "h-[10px] leading-[9px]" : "h-[11px] leading-[10px]"}"><th class="border-r border-b border-b-[#d6d6d6] p-0 font-normal ${head}">${r}</th>${names.map((n) => cell(n, r)).join("")}</tr>`;
      }
      document.getElementById("grid").innerHTML = rows;
    </script>
  </body>
</html>
